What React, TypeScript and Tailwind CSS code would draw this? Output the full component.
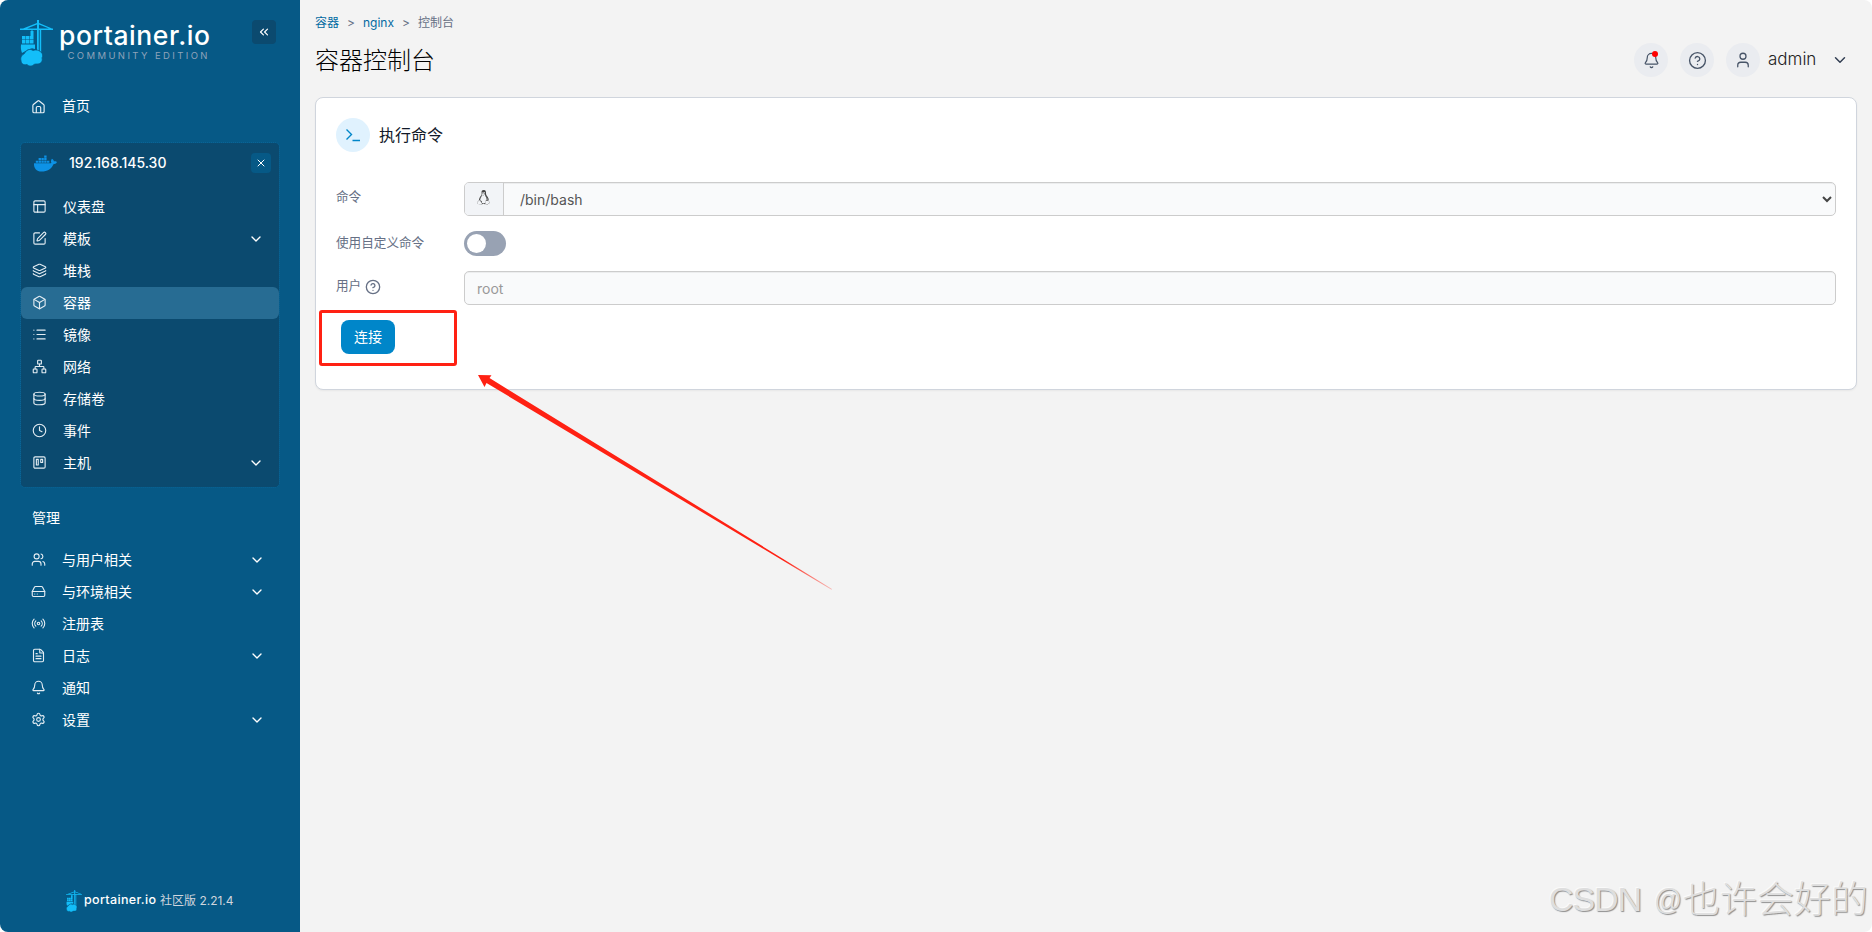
import type {ReactNode} from 'react';
import {
  Bell,
  Box,
  ChevronDown,
  ChevronsLeft,
  CircleQuestionMark,
  Clock,
  Database,
  FileText,
  HardDrive,
  Layers,
  List,
  Network,
  PanelsTopLeft,
  Radio,
  Settings,
  SquarePen,
  Trello,
  User,
  Users,
  X,
  type LucideIcon
} from 'lucide-react';
import {FaDocker, FaLinux} from 'react-icons/fa';
import clsx from 'clsx';

type Item = {label: string; icon: LucideIcon; expandable?: boolean; active?: boolean};

const ENVIRONMENT: Item[] = [
  {label: '仪表盘', icon: PanelsTopLeft},
  {label: '模板', icon: SquarePen, expandable: true},
  {label: '堆栈', icon: Layers},
  {label: '容器', icon: Box, active: true},
  {label: '镜像', icon: List},
  {label: '网络', icon: Network},
  {label: '存储卷', icon: Database},
  {label: '事件', icon: Clock},
  {label: '主机', icon: Trello, expandable: true}
];

const ADMIN: Item[] = [
  {label: '与用户相关', icon: Users, expandable: true},
  {label: '与环境相关', icon: HardDrive, expandable: true},
  {label: '注册表', icon: Radio},
  {label: '日志', icon: FileText, expandable: true},
  {label: '通知', icon: Bell},
  {label: '设置', icon: Settings, expandable: true}
];

export default function App() {
  return (
    <div className="h-[932px] w-[1872px] bg-white font-['Inter','Noto_Sans_CJK_SC',sans-serif]">
      <div className="relative flex h-full overflow-hidden rounded-lg bg-[#f3f3f3]">
        <Sidebar />
        <main className="flex-1 px-[15px]">
          <PageHeader />
          <ExecCard />
        </main>
        <Annotations />
      </div>
    </div>
  );
}

function Sidebar() {
  return (
    <aside className="flex w-[300px] shrink-0 flex-col bg-[#065986] text-sm text-white">
      <div className="flex h-[90px] items-start justify-between pt-5 pr-6 pl-5">
        <div className="flex">
          <Crane className="h-[46px] w-[33px]" />
          <svg className="ml-[6px] h-[46px] w-[150px] overflow-visible" viewBox="0 0 150 46">
            <text x="0" y="25" textLength="151" fontSize="26.5" fontWeight="500" fill="#fff">
              portainer.io
            </text>
            <text x="8.500" y="38.500" textLength="140" fontSize="9.5" fontWeight="400" fill="#8ea3ba">
              COMMUNITY EDITION
            </text>
          </svg>
        </div>
        <button className="flex size-6 items-center justify-center rounded bg-[#0b4a6f]">
          <ChevronsLeft size={14} />
        </button>
      </div>

      <div className="flex h-8 items-center pl-[31px]">
        <HomeIcon />
        <span className="-mt-px ml-4">首页</span>
      </div>

      <section className="mt-[21px] ml-[21px] flex h-[344px] w-[258px] flex-col rounded bg-[#0b4a6f] outline-1 outline-dotted outline-[#0a6496]">
        <div className="flex h-10 items-center pr-2 pl-[13px]">
          <FaDocker className="size-[23px] text-[#0d92e6]" />
          <span className="ml-3 flex-1 font-medium">192.168.145.30</span>
          <button className="flex size-5 items-center justify-center rounded bg-[#065986]">
            <X size={12} />
          </button>
        </div>
        <ul className="mt-2">
          {ENVIRONMENT.map((item) => (
            <NavItem key={item.label} item={item} className="pr-[15px] pl-[11px]" />
          ))}
        </ul>
      </section>

      <h3 className="mt-[15px] pl-8 leading-8">管理</h3>
      <ul className="mt-[10px]">
        {ADMIN.map((item) => (
          <NavItem key={item.label} item={item} className="pr-[35px] pl-[31px]" />
        ))}
      </ul>

      <div className="mt-auto flex h-[62px] items-start pl-[66px]">
        <Crane className="mt-5 h-[22px] w-4" />
        <svg className="mt-5 ml-[2px] h-[22px] w-[72px] overflow-visible" viewBox="0 0 72 22">
          <text x="0" y="14" textLength="72" fontSize="12.5" fontWeight="500" fill="#fff">
            portainer.io
          </text>
        </svg>
        <span className="mt-[22px] ml-1 text-xs leading-[18px] whitespace-nowrap text-[#d0d5dd]">社区版 2.21.4</span>
      </div>
    </aside>
  );
}

function NavItem({item, className}: {item: Item; className: string}) {
  const Icon = item.icon;
  return (
    <li className={clsx('flex h-8 items-center rounded-md', item.active && 'bg-[#276c93]', className)}>
      <Icon size={15} strokeWidth={1.8} className="-mt-px text-[#e4edf3]" />
      <span className="-mt-px ml-4 flex-1">{item.label}</span>
      {item.expandable ? <ChevronDown size={16} /> : null}
    </li>
  );
}

function PageHeader() {
  return (
    <header className="flex h-[97px] justify-between">
      <div>
        <div className="mt-[14px] flex h-[18px] items-center gap-2 text-xs text-[#667085]">
          <a className="text-[#026aa2]">容器</a>
          <span>&gt;</span>
          <a className="text-[#026aa2]">nginx</a>
          <span>&gt;</span>
          <span>控制台</span>
        </div>
        <h1 className="mt-[11px] text-2xl leading-9 font-light text-black">容器控制台</h1>
      </div>
      <div className="mt-[43px] flex h-[34px] items-center text-[#344054]">
        <RoundButton>
          <Bell size={17} strokeWidth={1.7} />
          <span className="absolute top-2 right-[10px] size-1.5 rounded-full bg-[#ff0000]" />
        </RoundButton>
        <RoundButton>
          <CircleQuestionMark size={19} strokeWidth={1.7} />
        </RoundButton>
        <RoundButton>
          <User size={18} strokeWidth={1.7} />
        </RoundButton>
        <span className="-ml-1 w-12 text-[17px] font-light text-[#222]">admin</span>
        <ChevronDown size={18} className="mr-2 ml-[15px]" />
      </div>
    </header>
  );
}

function RoundButton({children}: {children: ReactNode}) {
  return (
    <button className="relative mr-3 flex size-[34px] items-center justify-center rounded-full bg-[#eaecf0] text-[#475467]">
      {children}
    </button>
  );
}

function ExecCard() {
  return (
    <section className="h-[293px] rounded-lg border border-[#d0d5dd] bg-white px-5 pt-5 shadow-xs">
      <div className="flex items-center gap-[9px]">
        <span className="flex size-[34px] items-center justify-center rounded-full bg-[#e0f2fe] text-[#0086c9]">
          <svg width="16" height="16" viewBox="0 0 16 16" fill="none" stroke="currentColor" strokeWidth="1.4">
            <path d="M1.500 2.500l5 5-5 5M7.500 13.500h7.500" />
          </svg>
        </span>
        <h2 className="text-base text-[#101828]">执行命令</h2>
      </div>

      <div className="mt-[30px]">
        <Row label="命令" className="h-[34px]" labelClassName="mb-1">
          <div className="flex h-full flex-1 overflow-hidden rounded-[5px] border border-[#ccc] bg-[#f9fafb] inset-shadow-2xs">
            <span className="flex w-[39px] items-center justify-center border-r border-[#ccc] bg-[#f2f4f7]">
              <FaLinux className="-mt-1 -ml-px size-[15px] text-[#444]" />
            </span>
            <span className="flex-1 pl-4 text-sm leading-[34px] text-[#555]">/bin/bash</span>
            <svg className="mt-[11px] mr-[3px] size-[10px]" viewBox="0 0 10 10" fill="none" stroke="#444" strokeWidth="2">
              <path d="M1 3l4 4 4-4" />
            </svg>
          </div>
        </Row>
        <Row label="使用自定义命令" className="mt-[15px] h-[25px]">
          <span className="flex h-[25px] w-[42px] items-center rounded-full bg-[#98a2b3] pl-[3px]">
            <span className="size-[19px] rounded-full bg-white" />
          </span>
        </Row>
        <Row label="用户" help className="mt-[15px] h-[34px]" labelClassName="mb-1">
          <input
            placeholder="root"
            className="h-full flex-1 rounded-[5px] border border-[#ccc] bg-[#f9fafb] px-3 text-sm inset-shadow-2xs placeholder:text-[#999]"
          />
        </Row>
      </div>

      <button className="mt-[15px] ml-[5px] h-[34px] w-[54px] rounded-lg bg-[#0086c9] text-sm text-white">连接</button>
    </section>
  );
}

function Row({
  label,
  help,
  className,
  labelClassName,
  children
}: {
  label: string;
  help?: boolean;
  className: string;
  labelClassName?: string;
  children: ReactNode;
}) {
  return (
    <div className={clsx('flex items-center', className)}>
      <span className={clsx('flex w-32 items-center text-[12.6px] text-[#667085]', labelClassName)}>
        {label}
        {help ? <CircleQuestionMark size={16} className="mt-0.5 ml-1" /> : null}
      </span>
      {children}
    </div>
  );
}

// red highlight, arrow and the corner watermark float above the page
function Annotations() {
  return (
    <>
      <div className="absolute top-[310px] left-[319px] h-[56px] w-[138px] rounded-[3px] border-[3px] border-[#ff2113]" />
      <svg className="absolute top-[370px] left-[470px]" width="370" height="225" viewBox="470 370 370 225">
        <defs>
          <linearGradient id="tail" gradientUnits="userSpaceOnUse" x1="478" y1="375" x2="833" y2="590">
            <stop offset="0.86" stopColor="#ff2113" />
            <stop offset="1" stopColor="#ff2113" stopOpacity="0.25" />
          </linearGradient>
        </defs>
        <path d="M478 375L491.500 375.200L489.500 378L832 589L831.500 589.700L486.500 383L484.500 387Z" fill="url(#tail)" />
      </svg>
      <div className="absolute top-[874px] left-[1549px] flex h-[50px] items-center whitespace-nowrap text-[#dedede] [text-shadow:1px_1px_1px_#8f8f8f,-1px_-1px_0_#fafafa]">
        <svg className="overflow-visible" width="318" height="50">
          <text x="0" y="37" textLength="93" fontSize="34" fill="currentColor" className="font-['Liberation_Sans']">
            CSDN
          </text>
          <text x="105" y="36" textLength="28" lengthAdjust="spacingAndGlyphs" fontSize="29" fill="currentColor" className="font-['Liberation_Sans']">
            @
          </text>
          <text x="134" y="38.500" textLength="185" fontSize="37" fill="currentColor" className="font-light">
            也许会好的
          </text>
        </svg>
      </div>
    </>
  );
}

function HomeIcon() {
  return (
    <svg width="15" height="15" viewBox="0 0 24 24" fill="none" stroke="#e4edf3" strokeWidth="1.9" strokeLinecap="round" strokeLinejoin="round">
      <path d="M3 10.500a2 2 0 0 1 .8-1.600l7-5.800a2 2 0 0 1 2.400 0l7 5.800a2 2 0 0 1 .8 1.600V20a2 2 0 0 1-2 2H5a2 2 0 0 1-2-2z" />
      <path d="M8.500 21.500V14a2 2 0 0 1 2-2h3a2 2 0 0 1 2 2v7.500" />
    </svg>
  );
}

// crane lifting containers off a whale-shaped cloud
function Crane({className}: {className: string}) {
  return (
    <svg className={className} viewBox="0 0 33 46" fill="#13bef9">
      <path d="M17 0h2v3l13 5.500h1V10H0V8.500h3L17 3zM17 4.500L7 8.500h10zM19 4.500v4h10z" fillRule="evenodd" />
      <path d="M17 9h1.800v23H17zM19.700 9h1.500v23h-1.500zM11.500 10h1v5h-1z" />
      <path d="M10.500 11h3v5h-3zM2 16h3.500v3.500H2zM6 16h3.500v3.500H6zM10 16h3.500v3.500H10zM2 20h3.500v3.500H2zM6 20h3.500v3.500H6zM10 20h3.500v3.500H10z" />
      <path d="M1 24.500h14V29l-3-.8-4 1.300-2.500 1.500L2 33C1 30 .6 28 1 24.500z" />
      <path
        d="M6 31.500c2-2.500 5-2.500 7-1 3-1.500 6 0 8 1.500 2 2 2 4 1 6 1 3-1 6-4 6-2 0-3 0-4 .5-2 2-5 2-7 0-3 1-6-.5-6-4-1-3 1-6 3-6.500.5-1 1-2 2-2.500z"
        stroke="#065986"
        strokeWidth="0.8"
      />
    </svg>
  );
}
